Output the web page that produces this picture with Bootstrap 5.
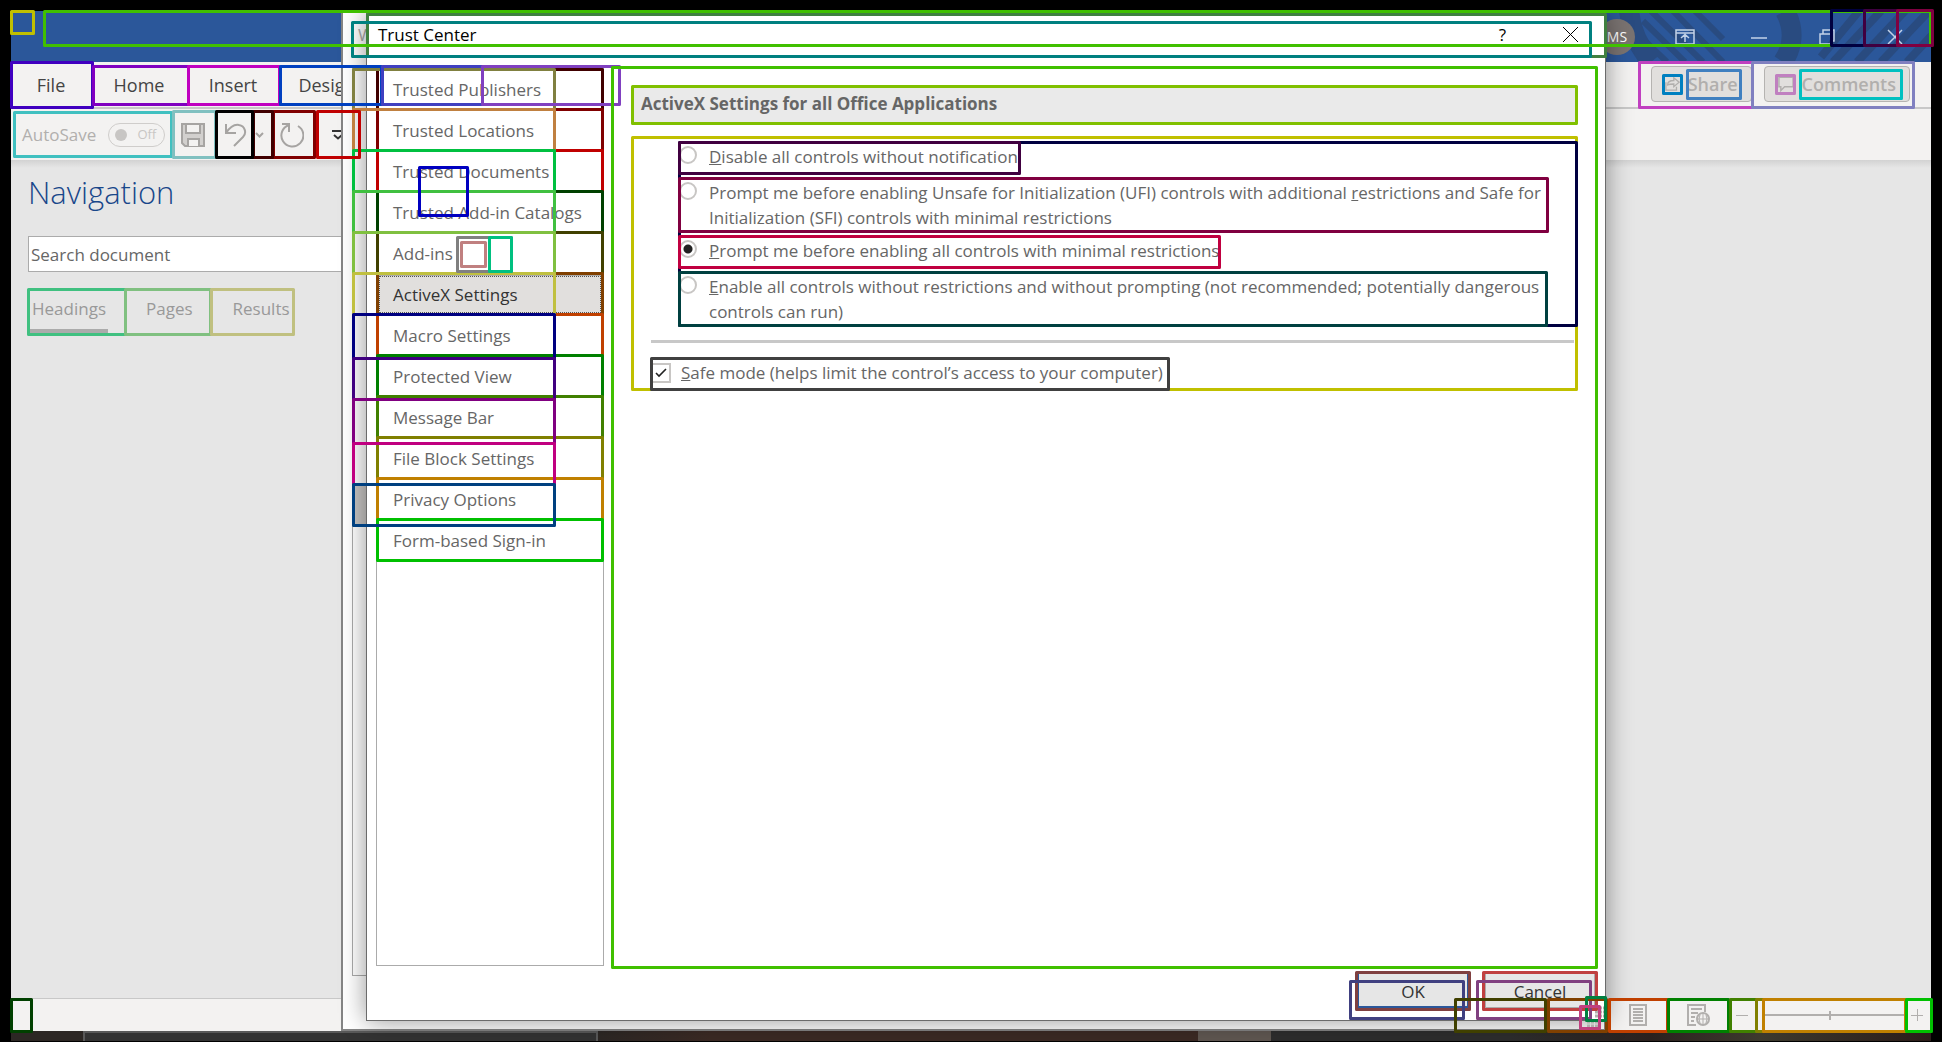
<!DOCTYPE html>
<html lang="en">
<head>
<meta charset="utf-8">
<meta name="viewport" content="width=device-width, initial-scale=1">
<title>Trust Center</title>
<link href="https://cdn.jsdelivr.net/npm/bootstrap@5.3.0/dist/css/bootstrap.min.css" rel="stylesheet">
<style>
body{background:#000;font-family:"Open Sans","Noto Sans",sans-serif;font-size:17px;line-height:25px;color:#666;overflow:hidden}
button{font:inherit;color:inherit}
.desktop{padding:11px 11px 1px}
.titlebar{height:51px;background:#2b579a}
.title-art{position:absolute;right:0;top:0;height:51px;width:326px}
.win-ctl{position:relative;color:#c3d2e8;padding-right:4px}
.win-ctl button,.plain{border:0;background:none;padding:0;display:flex;align-items:center;justify-content:center}
.avatar{width:36px;height:36px;background:#7a7371;color:#fff;font-size:14px}
.ribbon{height:47px;background:#f3f2f1;border-bottom:2px solid #c8c8c8;color:#444;font-size:18px}
.ribbon .plain{padding-top:2px}
.ribbon .tab-file{width:80px}.ribbon .tab-home{width:96px}.ribbon .tab-insert{width:92px}.ribbon .tab-design{width:96px}
.ribbon-btn{height:36px;background:#e1dfdd;border:1px solid #b5b3b1;border-radius:4px;color:#b1afad;font-weight:600;font-size:18px;padding:0 13px}
.ribbon-tools{padding:4px 21px 0 0;gap:12px}
.qat{height:51px;background:#f3f2f1;color:#b1afad;padding-left:11px}
.toggle{width:57px;height:24px;border:1px solid #cfcdcb;border-radius:12px;font-size:13px;color:#c8c6c4;padding:0 8px 0 6px}
.toggle i{width:12px;height:12px;border-radius:6px;background:#c8c6c4}
.workspace{background:linear-gradient(#d2d2d2,#e6e6e6 8px);padding:12px 17px}
.nav-title{font-size:31px;line-height:40px;color:#19478a;font-weight:300}
.search{width:420px;height:36px;border:1px solid #ababab;background:#fff;padding:0 2px;color:#666;margin-top:24px}
.search::placeholder{color:#666;opacity:1}
.nav-tabs-row{color:#999;margin-top:16px;padding-left:2px;gap:36px}
.nav-tabs-row button{height:45px;padding:0 2px;border-bottom:4px solid transparent}
.nav-tabs-row .on{border-color:#ababab}
.status{height:33px;background:#f3f2f1;border-top:1px solid #c8c8c8;color:#b1afad}
.zoom{appearance:none;background:linear-gradient(#b1afad,#b1afad) center/100% 2px no-repeat;width:142px;height:20px;margin:0}
.zoom::-webkit-slider-thumb{appearance:none;width:2px;height:9px;background:#b1afad}
.taskbar{height:10px;background:linear-gradient(90deg,#2c2724 0 587px,#3b2a24 700px 1187px,#5f5751 1187px 1260px,#2d2d2d 1260px 1500px,#2b211e 1640px,#3d3a2e 1750px,#2b1c19)}
.task{width:515px;margin-left:72px;background:#333;border:2px solid #595959;border-bottom:0}
.lang{margin-left:761px;color:#fff;font-size:15px;line-height:24px;padding-top:3px}
.dlg-back{position:absolute;left:341px;right:336px;top:12px;bottom:11px;background:#fff;border:2px solid #858585;border-top:0;padding:56px 9px 53px}
.back-list{height:100%;width:203px;border:1px solid #ababab;padding-top:415px}
.back-list div{height:41px;background:#c8c6c4}
.back-title{position:absolute;left:15px;top:10px;color:#aaa}
.dlg{position:absolute;left:366px;right:336px;top:12px;bottom:21px;background:#fff;border:1px solid #6b6b6b;border-top:0;box-shadow:0 0 24px rgba(0,0,0,.42)}
.dlg-title{height:56px;color:#000;padding:10px 22px 0 11px}
.dlg-main{padding:0 8px 0 9px}
.cat{flex:none;width:228px;border:1px solid #ababab;border-radius:0}
.cat button{height:41px;border:0;background:none;text-align:left;padding:0 0 0 16px;white-space:nowrap}
.cat .on{background:#e1dfdd;color:#333;border:2px solid #ababab;outline:1px dotted #555;outline-offset:-3px;padding-left:14px}
.pane{padding:18px 20px 0 28px;margin-right:1px;min-width:0}
.group-head{height:38px;background:#eaeaea;font-size:17px;line-height:35px;padding-left:9px}
.opts{padding:16px 27px 0 47px}
.opt{min-height:36px;padding:4px 0}
.opt.wide{min-height:58px}
.opt input,.check input{appearance:none;flex:none;margin:0;border:2px solid #c8c6c4;background:#fff}
.opt input{width:18px;height:18px;border-radius:9px;margin:2px 12px 0 0}
.opt input:checked{background:radial-gradient(#222 0 4px,#fff 5px)}
.rule{height:3px;background:#c8c8c8;margin:12px 2px 17px 19px}
.check{padding-left:19px}
.check input{width:20px;height:20px;margin-right:10px;background:#fff url("data:image/svg+xml,%3Csvg xmlns='http://www.w3.org/2000/svg' viewBox='0 0 16 16'%3E%3Cpath d='M3 8l3 3 7-7' fill='none' stroke='%23222' stroke-width='1.6'/%3E%3C/svg%3E") center/16px no-repeat}
.foot{height:54px;padding:6px 10px 0}
.foot button{width:110px;height:36px;background:#e6e6e6;border:1px solid #ababab;color:#333;padding:2px 0 0;line-height:25px}
.foot .primary{border:2px solid #2b579a;width:112px}
.marks{position:absolute;left:0;top:0;pointer-events:none;fill:none;stroke-width:3;stroke-linejoin:round}
svg{flex:none}
</style>
<script src="https://cdn.jsdelivr.net/npm/bootstrap@5.3.0/dist/js/bootstrap.bundle.min.js"></script>
</head>
<body>
<div class="desktop vh-100 d-flex flex-column position-relative">
  <header class="titlebar position-relative d-flex justify-content-end">
    <svg class="title-art" viewBox="0 0 326 51" fill="none" stroke="#294b80"><path d="M24 0c2 20 10 36 22 51M180 0c10 18 8 36-2 51" stroke-width="20"/><path d="M38 10l42 41M38 28l24 23M46 0l52 51M68 0l50 51M90 0l28 28" stroke-width="6"/><path d="M254 0l-38 46M276 0l-48 51M300 0l-48 51M324 0l-48 51M340 10l-38 41" stroke-width="8"/></svg>
    <div class="win-ctl d-flex align-items-center">
      <span class="avatar rounded-circle d-flex align-items-center justify-content-center">MS</span>
      <button class="ms-4 px-3" aria-label="Ribbon display options"><svg width="20" height="16" fill="none" stroke="currentColor" stroke-width="1.5"><path d="M1 1h18v14H1zM1 4h18M10 13V6M6 9l4-3.500 4 3.500"/></svg></button>
      <button class="ms-3 ps-3 pe-4 me-1 ps-4" aria-label="Minimize"><svg width="20" height="16" stroke="currentColor" stroke-width="1.500"><path d="M0 9h16"/></svg></button>
      <button class="pe-4 ps-3 ms-1" aria-label="Restore"><svg width="16" height="16" fill="none" stroke="currentColor" stroke-width="1.500"><path d="M1 5h11v10H1zM4 5V1h11v11h-3"/></svg></button>
      <button class="ms-1 px-4" aria-label="Close"><svg width="16" height="16" stroke="currentColor" stroke-width="1.500"><path d="M1 1l14 14M15 1L1 15"/></svg></button>
    </div>
  </header>
  <nav class="ribbon d-flex">
    <button class="plain tab-file">File</button><button class="plain tab-home">Home</button><button class="plain tab-insert">Insert</button><button class="plain tab-design">Design</button>
    <div class="ribbon-tools ms-auto d-flex">
      <button class="ribbon-btn d-flex align-items-center gap-2"><svg width="15" height="16" viewBox="0 0 17 16" fill="none" stroke="currentColor" stroke-width="1.500"><path d="M1 6V15h12v-4M3 9c0-4 3-5 7-5V1l6 5-6 5V8c-3 0-5 0-7 1z"/></svg>Share</button>
      <button class="ribbon-btn d-flex align-items-center gap-2"><svg width="16" height="16" viewBox="0 0 17 16" fill="none" stroke="currentColor" stroke-width="1.500"><path d="M1 1h15v10H7l-4 4v-4H1z"/></svg>Comments</button>
    </div>
  </nav>
  <div class="qat d-flex align-items-center">
    <span class="me-2 pe-1">AutoSave</span>
    <button class="plain toggle justify-content-between" aria-label="AutoSave off"><i></i>Off</button>
    <button class="plain ms-3" aria-label="Save"><svg width="24" height="24" fill="none" stroke="#a6a4a2" stroke-width="2"><path d="M1 1h22v22H4l-3-3z" fill="#d2d0ce"/><path d="M5 1h14v9H5zM7 23v-7h11v7" fill="#f3f2f1"/></svg></button>
    <button class="plain ms-3 ps-1" aria-label="Undo"><svg width="22" height="24" fill="none" stroke="#a6a4a2" stroke-width="2"><path d="M1 1v9h10M1 10c4-6 8-9 13-8 6 1 8 8 4 12l-9 9"/></svg></button>
    <button class="plain ms-2" aria-label="Undo list"><svg width="9" height="6" fill="none" stroke="#a6a4a2" stroke-width="2"><path d="M1 1l3.500 3.500L8 1"/></svg></button>
    <button class="plain ms-3" aria-label="Redo"><svg width="24" height="26" fill="none" stroke="#a6a4a2" stroke-width="2"><path d="M2 2h7v8M9 3A11 11 0 1 0 18 4"/></svg></button>
    <button class="plain ms-4" aria-label="Customize"><svg width="15" height="10" fill="none" stroke="#333" stroke-width="2"><path d="M4 1h11M6 5l4 3.500L14 5"/></svg></button>
  </div>
  <main class="workspace flex-fill">
    <div class="nav-title">Navigation</div>
    <input class="search d-block" placeholder="Search document" aria-label="Search document">
    <div class="nav-tabs-row d-flex">
      <button class="plain on">Headings</button><button class="plain">Pages</button><button class="plain">Results</button>
    </div>
  </main>
  <footer class="status d-flex align-items-center justify-content-end">
    <button class="plain" aria-label="Print layout"><svg width="18" height="22" fill="none" stroke="currentColor" stroke-width="2"><path d="M1 1h16v20H1zM4 5h10M4 8h10M4 11h10M4 14h10M4 17h10"/></svg></button>
    <button class="plain ms-4 px-3" aria-label="Web layout"><svg width="24" height="22" fill="none" stroke="currentColor" stroke-width="2"><path d="M9 21H1V1h17v7M4 5h11M4 9h7M4 13h4M4 17h3"/><circle cx="16" cy="15" r="6"/><path d="M10 15h12M16 9v12M13 11q-2 4 0 8M19 11q2 4 0 8" stroke-width="1"/></svg></button>
    <button class="plain ms-2" aria-label="Zoom out"><svg width="14" height="12" stroke="currentColor"><path d="M1 6.500h12"/></svg></button>
    <input class="zoom mx-3 me-1" type="range" min="0" max="100" value="46" aria-label="Zoom">
    <button class="plain me-2" aria-label="Zoom in"><svg width="12" height="12" stroke="currentColor"><path d="M0 6.500h12M6.500 0v12"/></svg></button>
  </footer>
  <div class="taskbar d-flex overflow-hidden"><div class="task"></div><span class="lang">EN</span></div>

  <div class="dlg-back overflow-hidden"><span class="back-title">W</span><div class="back-list"><div></div></div></div>
  <section class="dlg d-flex flex-column" role="dialog" aria-label="Trust Center">
    <div class="dlg-title d-flex">
      <span>Trust Center</span>
      <button class="plain ms-auto align-self-start" aria-label="Help">?</button>
      <button class="plain ms-5 ps-2 align-self-start pt-1 me-1" aria-label="Close"><svg width="17" height="17" stroke="#000"><path d="M1 1l15 15M16 1L1 16"/></svg></button>
    </div>
    <div class="dlg-main d-flex flex-fill">
      <div class="cat d-flex flex-column">
        <button>Trusted Publishers</button><button>Trusted Locations</button><button>Trusted Documents</button><button>Trusted Add-in Catalogs</button><button>Add-ins</button><button class="on">ActiveX Settings</button><button>Macro Settings</button><button>Protected View</button><button>Message Bar</button><button>File Block Settings</button><button>Privacy Options</button><button>Form-based Sign-in</button>
      </div>
      <div class="pane flex-fill">
        <h2 class="group-head fw-bold m-0">ActiveX Settings for all Office Applications</h2>
        <div class="opts">
          <div class="opt d-flex"><input type="radio" name="ax" id="r1"><label for="r1"><u>D</u>isable all controls without notification</label></div>
          <div class="opt wide d-flex"><input type="radio" name="ax" id="r2"><label for="r2">Prompt me before enabling Unsafe for Initialization (UFI) controls with additional <u>r</u>estrictions and Safe for Initialization (SFI) controls with minimal restrictions</label></div>
          <div class="opt d-flex"><input type="radio" name="ax" id="r3" checked><label for="r3"><u>P</u>rompt me before enabling all controls with minimal restrictions</label></div>
          <div class="opt wide d-flex"><input type="radio" name="ax" id="r4"><label for="r4"><u>E</u>nable all controls without restrictions and without prompting (not recommended; potentially dangerous controls can run)</label></div>
        </div>
        <div class="rule"></div>
        <div class="check d-flex align-items-center"><input type="checkbox" id="safe" checked><label for="safe"><u>S</u>afe mode (helps limit the control’s access to your computer)</label></div>
      </div>
    </div>
    <div class="foot d-flex justify-content-end"><button class="primary me-3">OK</button><button>Cancel</button></div>
  </section>

  <svg class="marks" width="1942" height="1042" aria-hidden="true"></svg>
</div>
<script>
// Element bounds: colour, left, top, right, bottom (outer edges), back to front
const bounds = `
408040 366 13 1607 58
008080 351 21 1592 58
40c000 43 10 1932 47
c0c000 10 10 35 35
000040 1830 9 1866 47
400040 1863 9 1899 47
800040 1896 9 1934 47
400000 376 68 604 111
800000 376 108 604 152
c00000 376 149 604 193
004000 376 190 604 234
404000 376 231 604 275
804000 376 272 604 316
c04000 376 313 604 357
008000 376 354 604 398
408000 376 395 604 439
808000 376 436 604 480
c08000 376 477 604 521
00c000 376 518 604 562
808040 352 68 556 111
c08040 352 108 556 152
00c040 352 149 556 193
40c040 352 190 556 234
80c040 352 231 556 275
c0c040 352 272 556 316
000080 352 313 556 360
400080 352 357 556 401
800080 352 398 556 445
c00080 352 442 556 486
004080 352 483 556 527
4000c0 10 61 94 109
8000c0 92 65 190 106
c000c0 187 65 281 106
0040c0 279 65 383 106
4040c0 381 65 484 106
8040c0 481 65 621 106
40c0c0 13 111 173 158
80c0c0 172 110 217 159
c00000 316 110 361 159
800000 272 110 316 159
400000 252 110 274 159
000000 215 110 254 159
40c080 27 288 127 336
80c080 124 288 212 336
c0c080 210 288 295 336
0000c0 418 166 469 217
808080 456 236 513 273
c08080 460 241 487 268
00c080 488 236 513 273
40c000 611 66 1598 969
80c000 631 85 1578 125
c0c000 631 136 1578 391
000040 678 141 1578 327
400040 678 141 1021 175
800040 678 177 1549 233
c00040 678 235 1221 269
004040 678 271 1548 327
404040 650 357 1170 391
804040 1355 971 1471 1011
c04040 1482 971 1598 1011
404080 1349 980 1465 1020
804080 1476 980 1592 1020
404000 1454 998 1547 1033
804000 1547 998 1608 1033
008040 1585 996 1607 1022
c04080 1579 1005 1601 1030
c04000 1608 998 1669 1033
008000 1667 998 1730 1033
408000 1729 998 1758 1033
808000 1755 998 1765 1033
c08000 1762 998 1907 1033
00c000 1905 998 1933 1033
004000 10 998 33 1033
c040c0 1638 61 1754 109
8080c0 1751 61 1915 109
0080c0 1662 74 1683 95
4080c0 1686 69 1742 100
c080c0 1775 74 1796 95
00c0c0 1799 69 1903 100`.trim().split("\n").map(l => l.split(" "));
const dots = '<path d="M1587 1022h14M1587 1026h14M1595 1008h9M1595 1012h9M1595 1016h9" stroke="#b1afad" stroke-dasharray="3 1"/>';
document.querySelector(".marks").innerHTML = dots + bounds.map(([c, l, t, r, b]) =>
  `<rect x="${+l + 1.5}" y="${+t + 1.5}" width="${r - l - 3}" height="${b - t - 3}" stroke="#${c}"/>`).join("");
</script>
</body>
</html>
